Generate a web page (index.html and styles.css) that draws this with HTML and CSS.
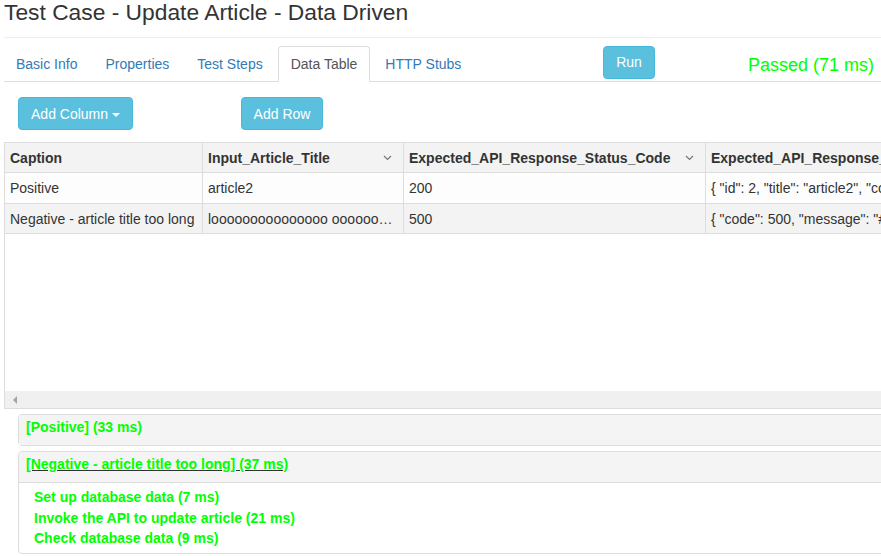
FILE: index.html
```html
<!DOCTYPE html>
<html>
<head>
<meta charset="utf-8">
<link rel="stylesheet" href="styles.css">
</head>
<body>
<div class="page">
  <h3 class="title">Test Case - Update Article - Data Driven</h3>
  <hr class="rule">
  <div class="toolbar">
    <ul class="tabs">
      <li><a>Basic Info</a></li>
      <li><a>Properties</a></li>
      <li><a>Test Steps</a></li>
      <li class="active"><a>Data Table</a></li>
      <li><a>HTTP Stubs</a></li>
    </ul>
    <button class="btn run">Run</button>
    <span class="passed">Passed (71 ms)</span>
  </div>
  <div class="actions">
    <button class="btn add-col">Add Column <span class="caret"></span></button>
    <button class="btn add-row">Add Row</button>
  </div>
  <div class="grid">
    <table class="data">
      <colgroup>
        <col class="c1"><col class="c2"><col class="c3"><col class="c4">
      </colgroup>
      <thead>
        <tr>
          <th>Caption</th>
          <th><div class="hcell"><span>Input_Article_Title</span><svg class="chev" width="9" height="6" viewBox="0 0 9 6"><polyline points="1,1 4.5,4.5 8,1" fill="none" stroke="#777" stroke-width="1.2"/></svg></div></th>
          <th><div class="hcell"><span>Expected_API_Response_Status_Code</span><svg class="chev" width="9" height="6" viewBox="0 0 9 6"><polyline points="1,1 4.5,4.5 8,1" fill="none" stroke="#777" stroke-width="1.2"/></svg></div></th>
          <th>Expected_API_Response_Body</th>
        </tr>
      </thead>
      <tbody>
        <tr>
          <td>Positive</td>
          <td>article2</td>
          <td>200</td>
          <td>{ "id": 2, "title": "article2", "content": "content2" }</td>
        </tr>
        <tr class="alt">
          <td>Negative - article title too long</td>
          <td>looooooooooooooo oooooooooooooooooooo</td>
          <td>500</td>
          <td>{ "code": 500, "message": "#IGNORE#" }</td>
        </tr>
      </tbody>
    </table>
    <div class="filler"></div>
    <div class="hscroll"><span class="arrow"></span></div>
  </div>
  <div class="results">
    <div class="panel">
      <div class="panel-head"><span class="ok">[Positive] (33 ms)</span></div>
    </div>
    <div class="panel">
      <div class="panel-head"><a class="ok linked">[Negative - article title too long] (37 ms)</a></div>
      <div class="panel-body">
        <div class="ok step">Set up database data (7 ms)</div>
        <div class="ok step">Invoke the API to update article (21 ms)</div>
        <div class="ok step">Check database data (9 ms)</div>
      </div>
    </div>
  </div>
</div>
</body>
</html>
```

FILE: styles.css
```css
html, body {
  margin: 0;
  padding: 0;
  overflow: hidden;
  background: #fff;
}
body {
  font-family: "Liberation Sans", Arial, sans-serif;
  font-size: 14px;
  line-height: 20px;
  color: #333;
}
.page {
  width: 1000px;
  padding-left: 4px;
}
.title {
  margin: 0;
  font-size: 22.8px;
  font-weight: 400;
  line-height: 25px;
  color: #333;
}
.rule {
  margin: 12px 0 8px 0;
  border: 0;
  border-top: 1px solid #eee;
  height: 0;
}
.toolbar {
  display: flex;
  align-items: flex-start;
  border-bottom: 1px solid #ddd;
  height: 35px;
}
.tabs {
  list-style: none;
  margin: 0 0 0 -1px;
  padding: 0;
  display: flex;
  width: 600px;
}
.tabs li {
  margin-right: 2px;
}
.tabs a {
  display: block;
  padding: 7px 12px;
  line-height: 20px;
  border: 1px solid transparent;
  border-radius: 4px 4px 0 0;
  color: #337ab7;
  cursor: pointer;
}
.tabs li.active a {
  color: #555;
  background: #fff;
  border-color: #ddd #ddd transparent #ddd;
}
.btn {
  font-family: "Liberation Sans", Arial, sans-serif;
  font-size: 14px;
  line-height: 19px;
  color: #fff;
  background: #5bc0de;
  border: 1px solid #46b8da;
  border-radius: 4px;
  padding: 6px 12px;
  white-space: nowrap;
  cursor: pointer;
}
.run {
  height: 33px;
  width: 52px;
  padding: 6px 0;
}
.passed {
  margin-left: 93px;
  margin-top: 8px;
  font-size: 18px;
  line-height: 22px;
  color: #00ff00;
}
.actions {
  display: flex;
  margin-top: 15px;
  padding-left: 14px;
}
.actions .btn {
  height: 33px;
}
.add-col {
  width: 115px;
  padding: 7px 0 5px 0;
}
.add-row {
  margin-left: 108px;
  width: 82px;
  padding: 7px 0 5px 0;
}
.caret {
  display: inline-block;
  width: 0;
  height: 0;
  margin-left: 0;
  vertical-align: middle;
  border-top: 4px solid #fff;
  border-left: 4px solid transparent;
  border-right: 4px solid transparent;
}
.grid {
  margin-top: 12px;
  height: 266px;
  border-left: 1px solid #ddd;
  border-bottom: 1px solid #ddd;
  display: flex;
  flex-direction: column;
  overflow: hidden;
}
.data {
  border-collapse: collapse;
  table-layout: fixed;
  width: 1100px;
  margin-left: -1px;
}
.c1 { width: 198px; }
.c2 { width: 201px; }
.c3 { width: 302px; }
.c4 { width: 399px; }
.data th, .data td {
  border: 1px solid #ddd;
  height: 29px;
  padding: 0 5px;
  text-align: left;
  white-space: nowrap;
  overflow: hidden;
  text-overflow: ellipsis;
  box-sizing: border-box;
}
.data th {
  background: #f3f3f3;
  font-weight: 700;
  height: 30px;
  color: #333;
}
.data tbody tr {
  background: #fdfdfd;
}
.data tbody tr.alt {
  background: #f3f3f3;
}
.data tbody td {
  height: 31px;
}
.data tbody tr.alt td {
  height: 30px;
}
.hcell {
  display: flex;
  align-items: center;
  justify-content: space-between;
}
.chev {
  margin-right: 6px;
  flex: none;
}
.filler {
  flex: 1;
}
.hscroll {
  height: 17px;
  background: #f0f0f0;
  display: flex;
  align-items: center;
  padding-left: 8px;
}
.arrow {
  width: 0;
  height: 0;
  border-right: 4px solid #a3a3a3;
  border-top: 4px solid transparent;
  border-bottom: 4px solid transparent;
}
.results {
  margin-top: 5px;
  padding-left: 14px;
  display: flex;
  flex-direction: column;
  gap: 5px;
}
.panel {
  border: 1px solid #ddd;
  border-radius: 4px;
  background: #fff;
}
.panel-head {
  background: #f4f4f4;
  padding: 2px 7px 8px 7px;
  line-height: 20px;
  border-radius: 3px 3px 0 0;
}
.panel-body {
  border-top: 1px solid #ddd;
  padding: 4px 15px 4px 15px;
}
.ok {
  color: #00ff00;
  font-weight: 700;
}
.linked {
  text-decoration: underline;
  text-decoration-color: #333;
  cursor: pointer;
}
.step {
  line-height: 20.5px;
}
```
